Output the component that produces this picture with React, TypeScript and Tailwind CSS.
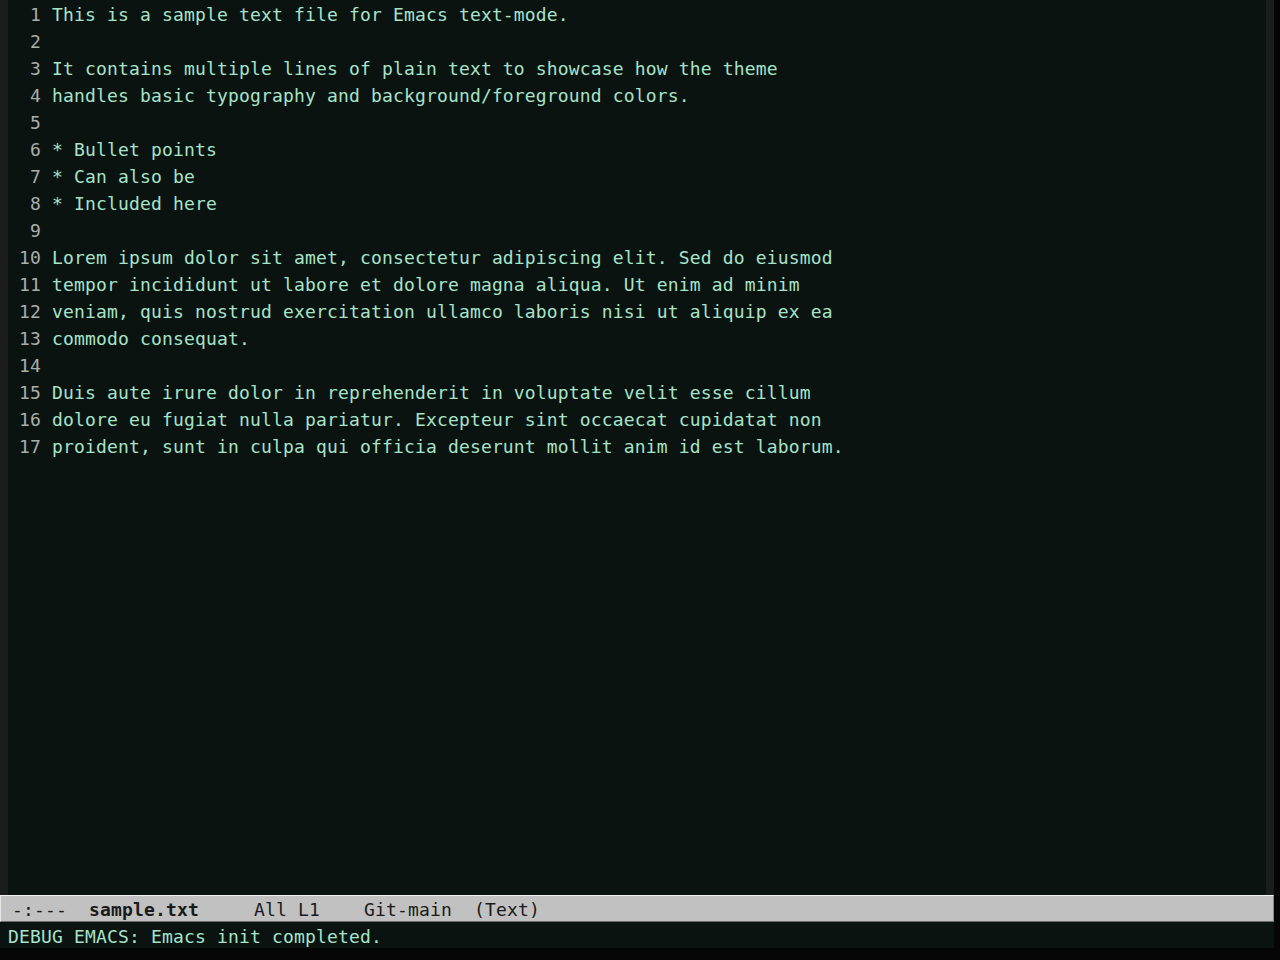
const lines = [
  'This is a sample text file for Emacs text-mode.',
  '',
  'It contains multiple lines of plain text to showcase how the theme',
  'handles basic typography and background/foreground colors.',
  '',
  '* Bullet points',
  '* Can also be',
  '* Included here',
  '',
  'Lorem ipsum dolor sit amet, consectetur adipiscing elit. Sed do eiusmod',
  'tempor incididunt ut labore et dolore magna aliqua. Ut enim ad minim',
  'veniam, quis nostrud exercitation ullamco laboris nisi ut aliquip ex ea',
  'commodo consequat.',
  '',
  'Duis aute irure dolor in reprehenderit in voluptate velit esse cillum',
  'dolore eu fugiat nulla pariatur. Excepteur sint occaecat cupidatat non',
  'proident, sunt in culpa qui officia deserunt mollit anim id est laborum.',
];

const mono = "font-['DejaVu_Sans_Mono','Liberation_Mono',monospace] text-[18px] tracking-[0.16px]";

function App() {
  return (
    <div className={`w-[1280px] h-[960px] bg-[#050505] flex flex-col overflow-hidden ${mono}`}>
      <div className="w-[1274px] flex flex-col">
        {/* Buffer window */}
        <div className="h-[895px] flex bg-[#0b1311]">
          <div className="w-[8px] bg-[#1b1d1c]" />
          <div className="flex-1 flex flex-col pt-[1px]">
            {lines.map((line, i) => (
              <div key={i} className="h-[27px] leading-[27px] flex whitespace-pre">
                <span className="w-[44px] text-right pr-[11px] text-[#a9aeab]">{i + 1}</span>
                <span className="text-[#a6e3c8]">{line}</span>
              </div>
            ))}
          </div>
          <div className="w-[8px] bg-[#1b1d1c]" />
        </div>

        {/* Mode line */}
        <div className="h-[27px] overflow-hidden bg-[#c1c1c1] border-t border-t-[#f2f2f2] border-b border-b-[#6e6e6e] border-l border-l-[#e8e8e8] border-r border-r-[#8a8a8a] pt-[2px] leading-[24px] text-[#1a1a1a] whitespace-pre">
          {' -:---  '}
          <span className="font-bold">sample.txt</span>
          {'     All L1    Git-main  (Text)'}
        </div>

        {/* Echo area */}
        <div className="h-[26px] overflow-hidden bg-[#0b1311] leading-[30px] pl-[8px] text-[#a6e3c8] whitespace-pre">
          DEBUG EMACS: Emacs init completed.
        </div>
      </div>
    </div>
  );
}

export default App;
